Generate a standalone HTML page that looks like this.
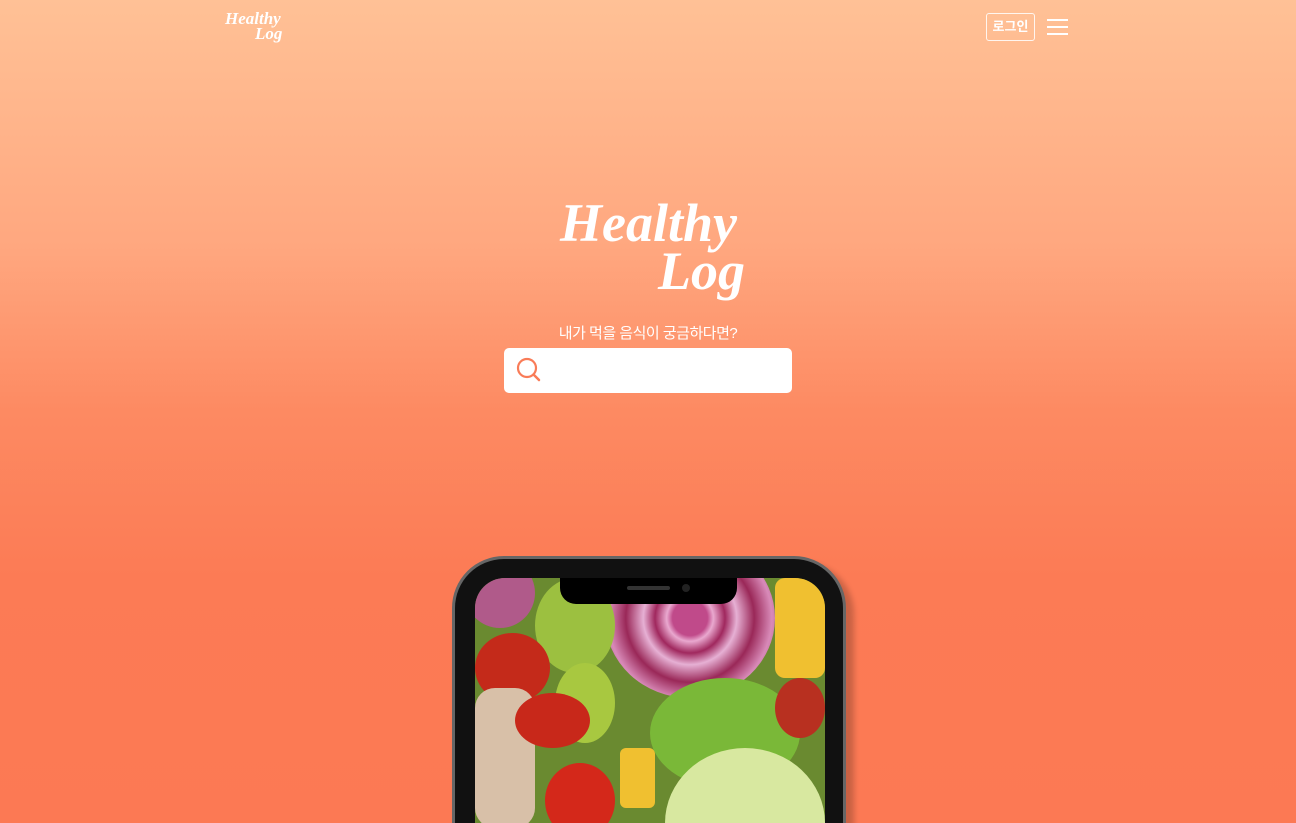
<!DOCTYPE html>
<html><head><meta charset="utf-8"><style>
*{margin:0;padding:0;box-sizing:border-box}
html,body{width:1296px;height:823px;overflow:hidden}
body{background:linear-gradient(180deg,#ffc196 0%,#ffa77f 30%,#fd8a62 50%,#fc7b55 70%,#fc7954 100%);font-family:"Liberation Sans","Noto Sans CJK KR",sans-serif;position:relative}
.logo{position:absolute;color:#fff;font-family:"Liberation Serif",serif;font-style:italic;font-weight:bold;line-height:1}
.login{position:absolute;left:986px;top:13px;width:49px;height:28px;border:1px solid rgba(255,255,255,.85);border-radius:3px;color:#fff;font-size:13px;font-weight:bold;text-align:center;line-height:26px}
.menu{position:absolute;left:1047px;top:19px;width:21px}
.menu i{display:block;height:2px;background:#fff;margin-bottom:5px}
.q{position:absolute;left:0;width:1296px;text-align:center;top:322px;color:#fff;font-size:15px;letter-spacing:-0.5px}
.search{position:absolute;left:504px;top:348px;width:288px;height:45px;background:#fff;border-radius:5px}
.phone{position:absolute;left:452px;top:556px;width:394px;height:267px;background:#111;border-radius:52px 52px 0 0;border:3px solid #666;border-bottom:none;box-shadow:8px 6px 6px rgba(0,0,0,.2);overflow:hidden}
.screen{position:absolute;left:20px;top:19px;width:350px;height:245px;border-radius:30px 30px 0 0;overflow:hidden;background:#6a8a30}
.notch{position:absolute;left:85px;top:0;width:177px;height:26px;background:#000;border-radius:0 0 16px 16px}
.c{position:absolute;border-radius:50%}
</style></head><body>
<div class="logo" style="left:225px;top:10px;font-size:17px">Healthy</div>
<div class="logo" style="left:255px;top:25px;font-size:17px">Log</div>
<div class="login">로그인</div>
<div class="menu"><i></i><i></i><i></i></div>
<div class="logo" style="left:560px;top:196px;font-size:54px">Healthy</div>
<div class="logo" style="left:658px;top:244px;font-size:54px">Log</div>
<div class="q">내가 먹을 음식이 궁금하다면?</div>
<div class="search"><svg width="30" height="30" style="position:absolute;left:11px;top:8px" viewBox="0 0 30 30"><circle cx="12" cy="12" r="9" fill="none" stroke="#f97c58" stroke-width="2.2"/><line x1="18.5" y1="18.5" x2="24" y2="24" stroke="#f97c58" stroke-width="2.5" stroke-linecap="round"/></svg></div>
<div class="phone"><div class="screen">
<div class="c" style="left:130px;top:-40px;width:170px;height:160px;background:radial-gradient(circle,#c04a8a 0 15%,#e9a8cf 20%,#a0285e 30%,#e6b0d4 40%,#9a2858 55%,#d88ab8 70%,#8c2050 100%)"></div>
<div class="c" style="left:-10px;top:-20px;width:70px;height:70px;background:#b05a8a"></div>
<div class="c" style="left:60px;top:0;width:80px;height:95px;background:#9cc040"></div>
<div class="c" style="left:0;top:55px;width:75px;height:70px;background:#c42a1a"></div>
<div class="c" style="left:80px;top:85px;width:60px;height:80px;background:#a8c840"></div>
<div class="c" style="left:0;top:110px;width:60px;height:140px;background:#d8c0a8;border-radius:20px"></div>
<div class="c" style="left:40px;top:115px;width:75px;height:55px;background:#c8281a"></div>
<div class="c" style="left:70px;top:185px;width:70px;height:75px;background:#d4281a"></div>
<div class="c" style="left:175px;top:100px;width:150px;height:110px;background:#7ab838"></div>
<div class="c" style="left:190px;top:170px;width:160px;height:150px;background:#d8e8a0"></div>
<div class="c" style="left:300px;top:0;width:50px;height:100px;background:#f0c030;border-radius:10px"></div>
<div class="c" style="left:300px;top:100px;width:50px;height:60px;background:#b83020"></div>
<div class="c" style="left:145px;top:170px;width:35px;height:60px;background:#f0c030;border-radius:6px"></div>
<div class="notch"><div style="position:absolute;left:67px;top:8px;width:43px;height:4px;background:#333;border-radius:2px"></div><div style="position:absolute;left:122px;top:6px;width:8px;height:8px;background:#222;border-radius:50%"></div></div>
</div></div>
</body></html>
